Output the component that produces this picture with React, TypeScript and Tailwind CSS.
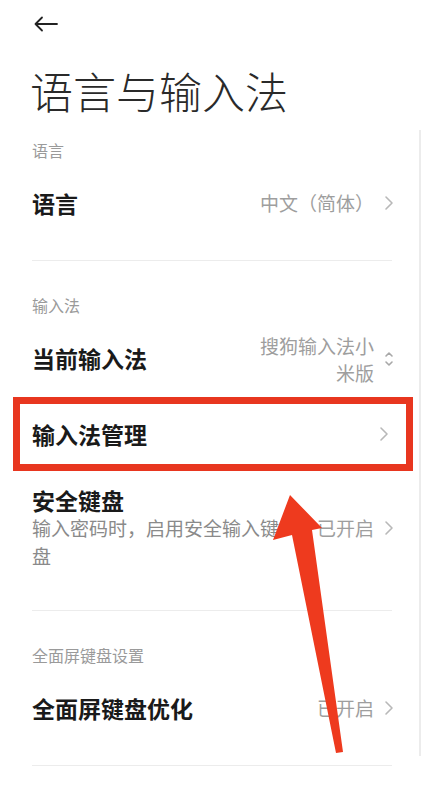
import React from 'react'

const font = { fontFamily: '"Noto Sans CJK SC", "Noto Sans", sans-serif' }

const Chevron = () => (
  <svg width="10" height="16" viewBox="0 0 10 16" className="ml-[10px] shrink-0">
    <path d="M2 2 L8 8 L2 14" fill="none" stroke="#b8b8b8" strokeWidth="1.6" strokeLinecap="round" strokeLinejoin="round" />
  </svg>
)

const UpDown = () => (
  <svg width="10" height="18" viewBox="0 0 10 18" className="ml-[10px] shrink-0">
    <path d="M2 6 L5 3 L8 6 M2 12 L5 15 L8 12" fill="none" stroke="#a8a8a8" strokeWidth="1.6" strokeLinecap="round" strokeLinejoin="round" />
  </svg>
)

const Header = ({ text, first }: { text: string; first?: boolean }) => (
  <div className={`px-8 text-[16px] leading-[16px] text-[#9a9a9a] ${first ? 'h-[33px] pt-[10px]' : 'h-[59px] pt-[36px]'}`}>
    {text}
  </div>
)

const Divider = () => <div className="mx-8 mt-[19px] h-px w-[360px] bg-[#ececec]" />

const Row = ({ title, value }: { title: string; value: string }) => (
  <div className="flex h-[76px] items-center justify-between px-8">
    <span className="text-[23px] font-bold text-[#1a1a1a]">{title}</span>
    <div className="flex items-center">
      <span className="text-[19px] text-[#9e9e9e]">{value}</span>
      <Chevron />
    </div>
  </div>
)

const App = () => {
  return (
    <div className="relative h-[800px] w-[426px] overflow-hidden bg-white" style={font}>
      {/* top bar */}
      <div className="flex h-[48px] items-center pl-[34px]">
        <svg width="24" height="16" viewBox="0 0 24 16">
          <path d="M23 8 H1.5 M8 1.5 L1.5 8 L8 14.5" fill="none" stroke="#222" strokeWidth="1.8" strokeLinecap="round" strokeLinejoin="round" />
        </svg>
      </div>
      <div className="flex h-[84px] items-center px-[30px]">
        <h1 className="text-[43px] font-light leading-[43px] text-[#2a2a2a]">语言与输入法</h1>
      </div>

      <Header text="语言" first />
      <Row title="语言" value="中文（简体）" />
      <Divider />

      <Header text="输入法" />
      <div className="flex h-[77px] items-center justify-between px-8">
        <span className="text-[23px] font-bold text-[#1a1a1a]">当前输入法</span>
        <div className="flex items-center">
          <span className="w-[122px] text-right text-[19px] leading-[27px] text-[#9e9e9e]">搜狗输入法小米版</span>
          <UpDown />
        </div>
      </div>

      <div className="mx-[13px] flex h-[74px] items-center justify-between border-[7px] border-[#e8361f] pl-[12px] pr-[17px]">
        <span className="text-[23px] font-bold text-[#1a1a1a]">输入法管理</span>
        <Chevron />
      </div>

      <div className="flex h-[139px] justify-between px-8 pt-[15px]">
        <div className="w-[252px]">
          <div className="text-[23px] font-bold leading-[28px] text-[#1a1a1a]">安全键盘</div>
          <div className="text-[19px] leading-[28px] text-[#8a8a8a]">输入密码时，启用安全输入键盘</div>
        </div>
        <div className="flex h-[54px] items-end">
          <span className="text-[19px] leading-[24px] text-[#9e9e9e]">已开启</span>
          <div className="mb-[4px]"><Chevron /></div>
        </div>
      </div>
      <div className="mx-8 h-px w-[360px] bg-[#ececec]" />

      <Header text="全面屏键盘设置" />
      <Row title="全面屏键盘优化" value="已开启" />
      <Divider />

      <Header text="更多设置" />

      {/* faint scroll edge */}
      <div className="absolute left-[419px] top-[130px] h-[626px] w-[2px] bg-[#ececec]" />

      {/* annotation arrow */}
      <svg className="absolute left-0 top-0" width="426" height="800" viewBox="0 0 426 800">
        <polygon points="290,495 273,540 292,535 336,753 343,752 312,530 322,528" fill="#ee3a1e" />
      </svg>
    </div>
  )
}

export default App
